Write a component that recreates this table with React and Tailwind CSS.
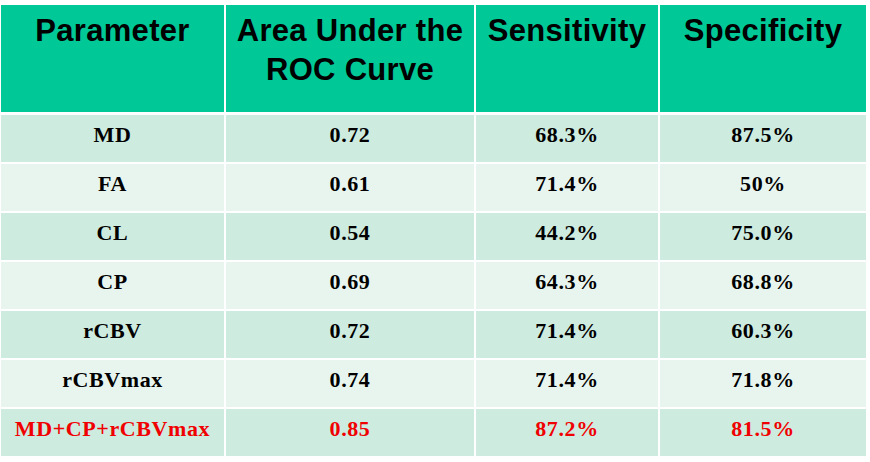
// ROC analysis table: header in green, alternating mint rows, combined model highlighted in red

import React from 'react';

const rows = [
  { name: 'MD', auc: '0.72', sens: '68.3%', spec: '87.5%' },
  { name: 'FA', auc: '0.61', sens: '71.4%', spec: '50%' },
  { name: 'CL', auc: '0.54', sens: '44.2%', spec: '75.0%' },
  { name: 'CP', auc: '0.69', sens: '64.3%', spec: '68.8%' },
  { name: 'rCBV', auc: '0.72', sens: '71.4%', spec: '60.3%' },
  { name: 'rCBVmax', auc: '0.74', sens: '71.4%', spec: '71.8%' },
  { name: 'MD+CP+rCBVmax', auc: '0.85', sens: '87.2%', spec: '81.5%', highlight: true },
];

const headers = ['Parameter', 'Area Under the ROC Curve', 'Sensitivity', 'Specificity'];

const App = () => {
  return (
    <div className="w-[870px] h-[462px] bg-white pt-[5px] pl-[1px] overflow-hidden">
      <div className="grid grid-cols-[223px_248px_182px_206px] gap-x-[2px] mb-[3px]">
        {headers.map((h) => (
          <div
            key={h}
            className="h-[107px] bg-[#00c896] text-center text-black font-bold text-[31px] leading-[39px] tracking-[0.3px] pt-[6px] px-1 font-['Liberation_Sans',Arial,sans-serif]"
          >
            {h}
          </div>
        ))}
      </div>

      <div className="flex flex-col gap-y-[2px]">
        {rows.map((r, i) => (
          <div
            key={r.name}
            className={`grid grid-cols-[223px_248px_182px_206px] gap-x-[2px] ${
              r.highlight ? 'text-[#f00000]' : 'text-black'
            }`}
          >
            {[r.name, r.auc, r.sens, r.spec].map((v, j) => (
              <div
                key={j}
                className={`h-[47px] text-center font-bold text-[22px] leading-[24px] tracking-[0.6px] pt-[8px] font-['Liberation_Serif','Times_New_Roman',serif] ${
                  i % 2 === 0 ? 'bg-[#cdebdf]' : 'bg-[#e8f5ef]'
                }`}
              >
                {v}
              </div>
            ))}
          </div>
        ))}
      </div>
    </div>
  );
};

export default App;
